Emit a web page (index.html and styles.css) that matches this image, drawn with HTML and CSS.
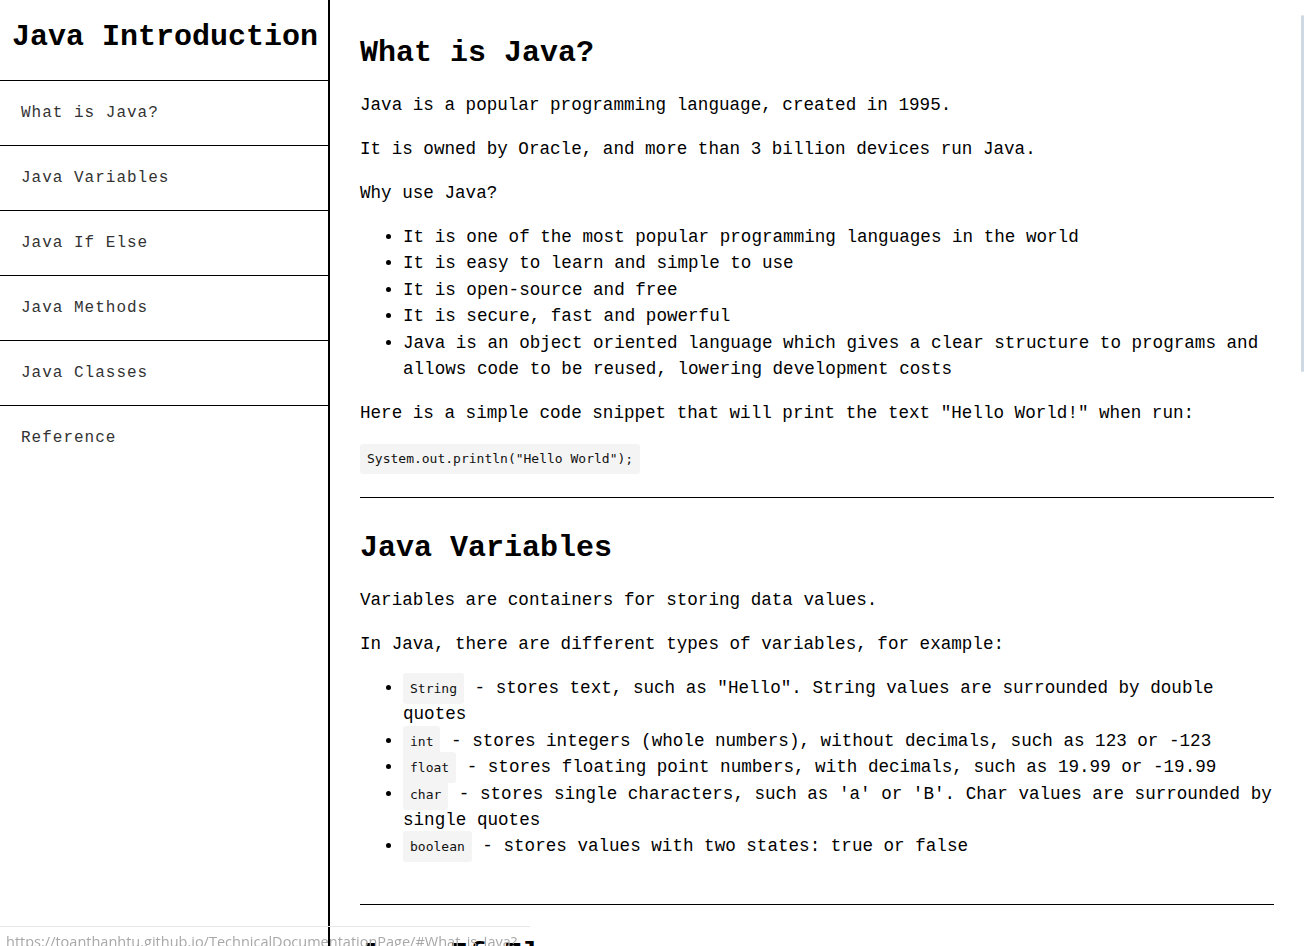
FILE: index.html
```html
<!DOCTYPE html>
<html lang="en">
<head>
<meta charset="utf-8">
<title>Java Introduction</title>
<link rel="stylesheet" href="styles.css">
</head>
<body>
<div class="page">
  <nav class="sidebar" id="navbar">
    <header class="sidebar-header"><h1 class="sidebar-title">Java Introduction</h1></header>
    <a class="nav-link" href="#What_is_Java?">What is Java?</a>
    <a class="nav-link" href="#Java_Variables">Java Variables</a>
    <a class="nav-link" href="#Java_If_Else">Java If Else</a>
    <a class="nav-link" href="#Java_Methods">Java Methods</a>
    <a class="nav-link" href="#Java_Classes">Java Classes</a>
    <a class="nav-link" href="#Reference">Reference</a>
  </nav>
  <main class="content" id="main-doc">
    <section class="doc-section" id="What_is_Java?">
      <h2 class="doc-heading">What is Java?</h2>
      <p class="doc-text">Java is a popular programming language, created in 1995.</p>
      <p class="doc-text">It is owned by Oracle, and more than 3 billion devices run Java.</p>
      <p class="doc-text">Why use Java?</p>
      <ul class="doc-list">
        <li>It is one of the most popular programming languages in the world</li>
        <li>It is easy to learn and simple to use</li>
        <li>It is open-source and free</li>
        <li>It is secure, fast and powerful</li>
        <li>Java is an object oriented language which gives a clear structure to programs and allows code to be reused, lowering development costs</li>
      </ul>
      <p class="doc-text">Here is a simple code snippet that will print the text "Hello World!" when run:</p>
      <code class="code-block">System.out.println("Hello World");</code>
    </section>
    <hr class="divider">
    <section class="doc-section doc-section--loose" id="Java_Variables">
      <h2 class="doc-heading">Java Variables</h2>
      <p class="doc-text">Variables are containers for storing data values.</p>
      <p class="doc-text">In Java, there are different types of variables, for example:</p>
      <ul class="doc-list">
        <li><code class="code-inline">String</code> - stores text, such as "Hello". String values are surrounded by double quotes</li>
        <li><code class="code-inline">int</code> - stores integers (whole numbers), without decimals, such as 123 or -123</li>
        <li><code class="code-inline">float</code> - stores floating point numbers, with decimals, such as 19.99 or -19.99</li>
        <li><code class="code-inline">char</code> - stores single characters, such as 'a' or 'B'. Char values are surrounded by single quotes</li>
        <li><code class="code-inline">boolean</code> - stores values with two states: true or false</li>
      </ul>
    </section>
    <hr class="divider">
    <section class="doc-section" id="Java_If_Else">
      <h2 class="doc-heading">Java If Else</h2>
      <p class="doc-text">Java supports the usual logical conditions from mathematics.</p>
    </section>
  </main>
</div>
<div class="status-bubble">https://toanthanhtu.github.io/TechnicalDocumentationPage/#What_is_Java?</div>
<div class="scroll-thumb"></div>
</body>
</html>
```
FILE: styles.css
```css
html, body {
  margin: 0;
  padding: 0;
  background: #fff;
}

body {
  font-family: "Liberation Mono", "Courier New", monospace;
  color: #000;
}

.page {
  display: flex;
  height: 100vh;
  overflow: hidden;
}

.sidebar {
  flex: 0 0 328px;
  width: 328px;
  height: 100vh;
  border-right: 2px solid #000;
  display: flex;
  flex-direction: column;
}

.sidebar-header {
  height: 80px;
}

.sidebar-title {
  margin: 19px 0 0 12px;
  font-size: 30px;
  line-height: 36px;
  font-weight: bold;
  color: #000;
  white-space: nowrap;
}

.nav-link {
  display: block;
  border-top: 1px solid #000;
  height: 64px;
  line-height: 65px;
  padding: 0 21px;
  font-size: 16px;
  letter-spacing: 1px;
  color: #333;
  text-decoration: none;
}

.content {
  flex: 1;
  min-width: 0;
  padding: 3px 30px 0;
  overflow: hidden;
}

.doc-section {
  padding-bottom: 23px;
}

.doc-section--loose {
  padding-bottom: 27px;
}

.doc-heading {
  margin: 32px 0 21px;
  font-size: 30px;
  line-height: 36px;
  font-weight: bold;
}

.doc-text {
  margin: 0 0 17.6px;
  font-size: 17.6px;
  line-height: 26.4px;
}

.doc-list {
  margin: 0 0 17.6px;
  padding-left: 43px;
  font-size: 17.6px;
  line-height: 26.4px;
}

.doc-list li {
  line-height: 26.4px;
}

.code-block {
  display: inline-block;
  background: #f4f4f4;
  border-radius: 3px;
  padding: 7px 7px;
  font-family: "DejaVu Sans Mono", Consolas, monospace;
  font-size: 13px;
  line-height: 16px;
  color: #111;
  vertical-align: top;
}

.code-inline {
  background: #f4f4f4;
  border-radius: 3px;
  padding: 8px 7px;
  font-family: "DejaVu Sans Mono", Consolas, monospace;
  font-size: 13px;
  line-height: 1;
  color: #111;
}

.divider {
  margin: 0;
  height: 0;
  border: 0;
  border-top: 1px solid #000;
}

.status-bubble {
  position: fixed;
  left: 0;
  bottom: 0;
  width: 524px;
  height: 19px;
  padding: 0 0 0 6px;
  border-top: 1px solid #e8e8e8;
  font-family: "Open Sans", "Noto Sans", sans-serif;
  font-size: 14.5px;
  line-height: 30px;
  color: #a8a8a8;
  white-space: nowrap;
  overflow: hidden;
  pointer-events: none;
}

.scroll-thumb {
  position: fixed;
  right: 0;
  top: 15px;
  width: 3px;
  height: 357px;
  border-radius: 2px;
  background: #cfd9e4;
}
```
